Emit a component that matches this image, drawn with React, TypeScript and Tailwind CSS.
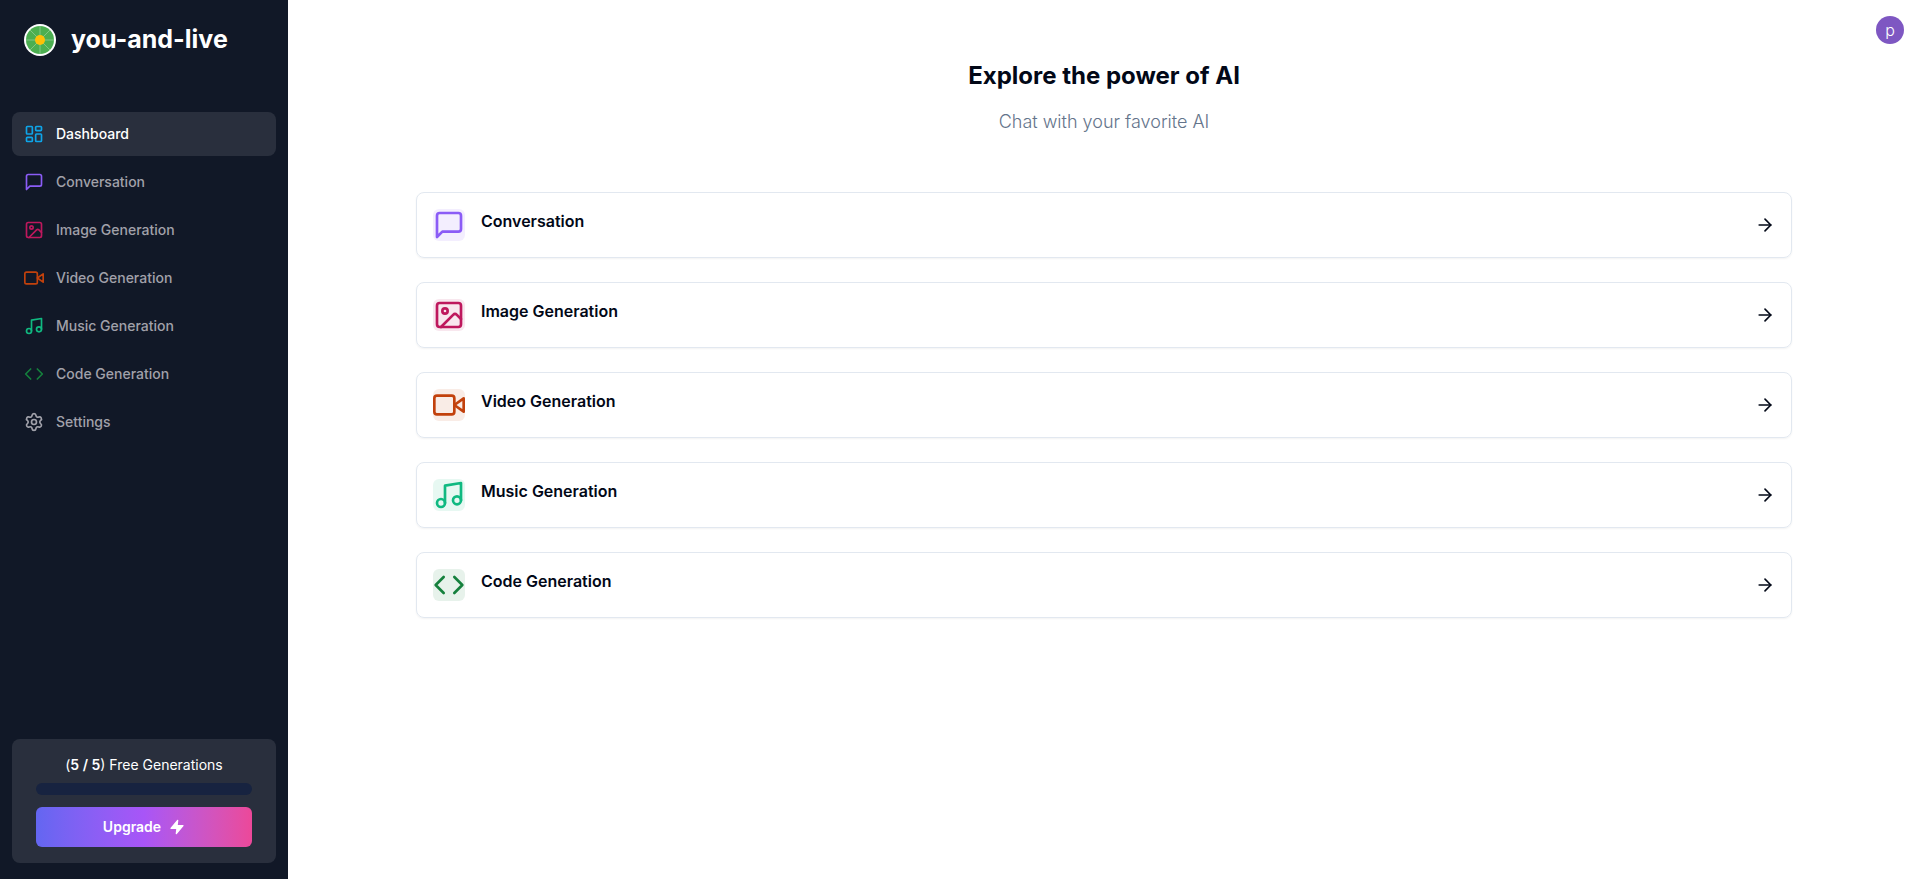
import { ArrowRight, Image as ImageIcon, LayoutDashboard, Music, Settings } from 'lucide-react';
import type { ReactNode } from 'react';

// Older lucide outlines, the current package redrew these three
function ChatIcon({ className }: { className: string }) {
  return (
    <svg className={className} viewBox="0 0 24 24" fill="none" stroke="currentColor" strokeWidth={2} strokeLinecap="round" strokeLinejoin="round">
      <path d="M21 15a2 2 0 0 1-2 2H7l-4 4V5a2 2 0 0 1 2-2h14a2 2 0 0 1 2 2z" />
    </svg>
  );
}

function VideoIcon({ className }: { className: string }) {
  return (
    <svg className={className} viewBox="0 0 24 24" fill="none" stroke="currentColor" strokeWidth={2} strokeLinecap="round" strokeLinejoin="round">
      <polygon points="23 7 16 12 23 17 23 7" />
      <rect x="1" y="5" width="15" height="14" rx="2" ry="2" />
    </svg>
  );
}

function CodeIcon({ className }: { className: string }) {
  return (
    <svg className={className} viewBox="0 0 24 24" fill="none" stroke="currentColor" strokeWidth={2} strokeLinecap="round" strokeLinejoin="round">
      <polyline points="16 18 22 12 16 6" />
      <polyline points="8 6 2 12 8 18" />
    </svg>
  );
}

function ZapIcon({ className }: { className: string }) {
  return (
    <svg className={className} viewBox="0 0 24 24" fill="currentColor" stroke="currentColor" strokeWidth={2} strokeLinecap="round" strokeLinejoin="round">
      <polygon points="13 2 3 14 12 14 11 22 21 10 12 10 13 2" />
    </svg>
  );
}

function Logo() {
  return (
    <svg className="w-8 h-8 mr-4 shrink-0" viewBox="0 0 32 32">
      <circle cx="16" cy="16" r="16" fill="#ffffff" />
      <circle cx="16" cy="16" r="14" fill="#4caf50" />
      <g stroke="#81c784" strokeWidth="1">
        <line x1="16" y1="2" x2="16" y2="30" />
        <line x1="2" y1="16" x2="30" y2="16" />
        <line x1="6" y1="6" x2="26" y2="26" />
        <line x1="26" y1="6" x2="6" y2="26" />
      </g>
      <circle cx="16" cy="16" r="5" fill="#ffc107" />
    </svg>
  );
}

interface NavItem {
  label: string;
  icon: ReactNode;
  active?: boolean;
}

const navItems: NavItem[] = [
  { label: 'Dashboard', icon: <LayoutDashboard className="w-5 h-5 mr-3 text-[#0ea5e9]" />, active: true },
  { label: 'Conversation', icon: <ChatIcon className="w-5 h-5 mr-3 text-[#8b5cf6]" /> },
  { label: 'Image Generation', icon: <ImageIcon className="w-5 h-5 mr-3 text-[#be185d]" /> },
  { label: 'Video Generation', icon: <VideoIcon className="w-5 h-5 mr-3 text-[#c2410c]" /> },
  { label: 'Music Generation', icon: <Music className="w-5 h-5 mr-3 text-[#10b981]" /> },
  { label: 'Code Generation', icon: <CodeIcon className="w-5 h-5 mr-3 text-[#15803d]" /> },
  { label: 'Settings', icon: <Settings className="w-5 h-5 mr-3 text-[#a1a1aa]" /> },
];

interface Tool {
  label: string;
  icon: ReactNode;
  box: string;
}

const tools: Tool[] = [
  { label: 'Conversation', icon: <ChatIcon className="w-8 h-8 text-[#8b5cf6]" />, box: 'bg-[#8b5cf6]/10' },
  { label: 'Image Generation', icon: <ImageIcon className="w-8 h-8 text-[#be185d]" />, box: 'bg-[#be185d]/10' },
  { label: 'Video Generation', icon: <VideoIcon className="w-8 h-8 text-[#c2410c]" />, box: 'bg-[#c2410c]/10' },
  { label: 'Music Generation', icon: <Music className="w-8 h-8 text-[#10b981]" />, box: 'bg-[#10b981]/10' },
  { label: 'Code Generation', icon: <CodeIcon className="w-8 h-8 text-[#15803d]" />, box: 'bg-[#15803d]/10' },
];

function Sidebar() {
  return (
    <aside className="w-72 shrink-0 h-full bg-[#111827] text-white flex flex-col justify-between px-3 pt-5 pb-4">
      <div>
        <div className="flex items-center h-10 pl-3 mb-[52px]">
          <Logo />
          <span className="text-[25px] font-bold -ml-px">you-and-live</span>
        </div>
        <div className="flex flex-col gap-1">
          {navItems.map((item) => (
            <div
              key={item.label}
              className={`flex items-center p-3 rounded-lg text-sm font-medium ${
                item.active ? 'bg-white/10 text-white' : 'text-[#a1a1aa]'
              }`}
            >
              {item.icon}
              {item.label}
            </div>
          ))}
        </div>
      </div>

      {/* Free usage counter */}
      <div className="bg-white/10 rounded-lg px-6 py-4">
        <p className="text-center text-sm mb-2">
          (<span className="font-semibold">5 / 5</span>) Free Generations
        </p>
        <div className="h-3 rounded-full bg-[#172340] mb-3" />
        <button className="w-full h-10 rounded-md flex items-center justify-center text-sm font-semibold text-white bg-gradient-to-r from-[#6366f1] via-[#a855f7] to-[#ec4899]">
          Upgrade
          <ZapIcon className="w-4 h-4 ml-2" />
        </button>
      </div>
    </aside>
  );
}

export default function App() {
  return (
    <div className="flex h-screen bg-white font-['Inter',sans-serif]">
      <Sidebar />
      <main className="flex-1 min-w-0">
        <div className="flex justify-end p-4">
          <div className="w-7 h-7 rounded-full bg-[#7e57c2] text-white text-base font-light flex items-center justify-center">
            p
          </div>
        </div>
        <div className="mb-14 flex flex-col gap-4">
          <h2 className="text-2xl font-bold text-center text-[#020817]">Explore the power of AI</h2>
          <p className="text-lg font-light text-center text-[#64748b]">Chat with your favorite AI</p>
        </div>
        <div className="px-32 flex flex-col gap-6">
          {tools.map((tool) => (
            <div
              key={tool.label}
              className="p-4 border border-[#e2e8f0] rounded-lg shadow-[0_1px_2px_rgba(0,0,0,0.05)] flex items-center justify-between"
            >
              <div className="flex items-start gap-4">
                <div className={`w-8 h-8 rounded-md flex items-center justify-center ${tool.box}`}>
                  {tool.icon}
                </div>
                <div className="font-semibold text-[#020817]">{tool.label}</div>
              </div>
              <ArrowRight className="w-5 h-5 text-[#020817]" />
            </div>
          ))}
        </div>
      </main>
    </div>
  );
}
